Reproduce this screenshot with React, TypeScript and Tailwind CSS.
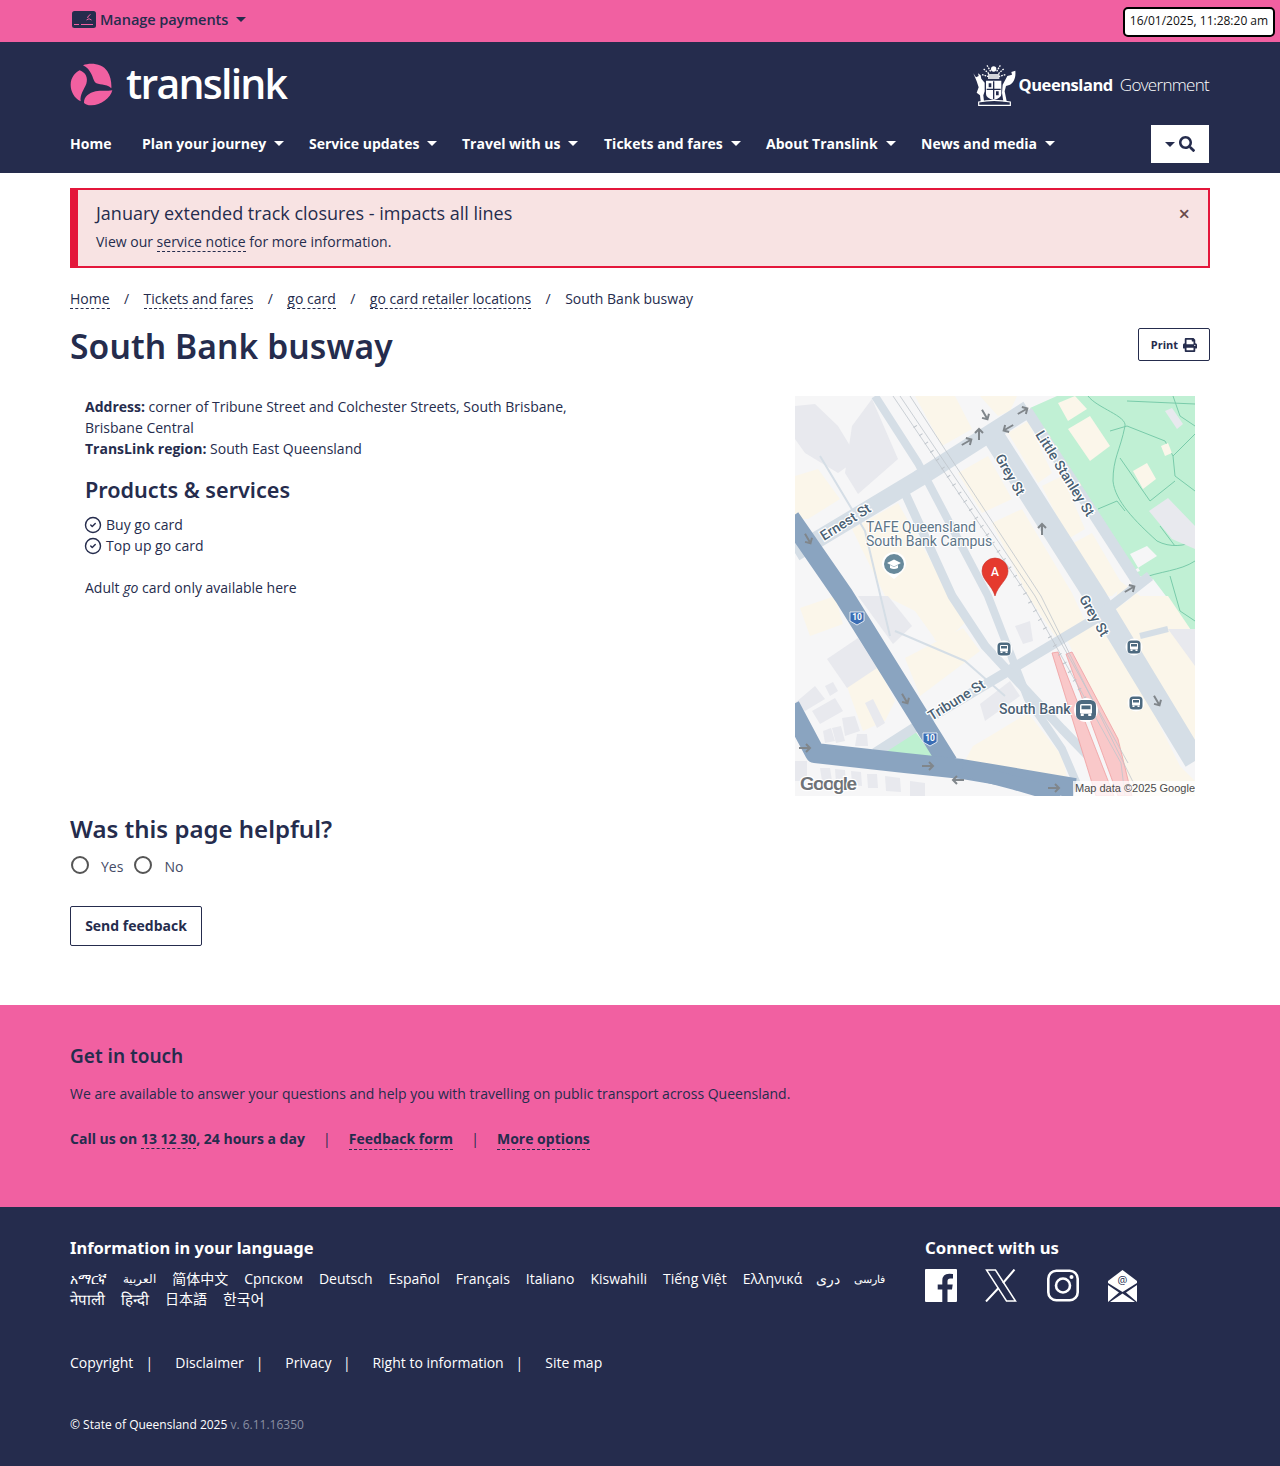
import { CircleCheck } from "lucide-react";
import { FaPrint, FaSearch } from "react-icons/fa";

const openSans = "font-['Open_Sans',sans-serif]";
const heading = "font-['Noto_Sans',sans-serif]";

const navItems = [
  { label: "Plan your journey", w: "w-[167px]" },
  { label: "Service updates", w: "w-[153px]" },
  { label: "Travel with us", w: "w-[142px]" },
  { label: "Tickets and fares", w: "w-[162px]" },
  { label: "About Translink", w: "w-[155px]" },
  { label: "News and media", w: "w-auto" },
];

const languages = [
  { text: "አማርኛ", size: "tracking-[-0.2px]" },
  { text: "العربية", size: "text-[11.5px]" },
  { text: "简体中文", size: "" },
  { text: "Српском", size: "" },
  { text: "Deutsch", size: "" },
  { text: "Español", size: "" },
  { text: "Français", size: "" },
  { text: "Italiano", size: "" },
  { text: "Kiswahili", size: "" },
  { text: "Tiếng Việt", size: "" },
  { text: "Ελληνικά", size: "" },
  { text: "دری", size: "-ml-[2px]" },
  { text: "فارسی", size: "text-[11px] -ml-[2px]" },
  { text: "नेपाली", size: "text-[15px]" },
  { text: "हिन्दी", size: "text-[15px]" },
  { text: "日本語", size: "" },
  { text: "한국어", size: "text-[15px]" },
];

const cream = [
  "120,0 160,0 177,33 147,50", "185,0 222,0 215,15 203,20", "213,37 233,25 257,77 243,87",
  "247,90 267,80 290,133 273,143", "273,150 297,137 328,190 317,200 300,200", "163,77 193,60 217,103 187,117",
  "197,127 227,113 277,197 290,225 262,243 233,200", "0,80 23,73 45,103 13,123 0,123",
  "57,133 103,107 150,190 172,225 145,250 120,215 90,200", "263,7 280,0 292,13 273,25", "273,33 295,20 315,50 295,65",
  "338,75 352,67 361,83 348,93", "366,50 373,47 377,57 370,60", "5,212 40,200 48,228 15,240",
  "50,285 80,265 100,305 90,325 68,335", "110,262 168,232 185,255 125,300", "200,337 233,317 267,360 273,385 167,370 178,350",
  "270,240 300,223 350,300 385,370 400,385 400,400 338,400 320,340", "320,213 340,200 373,200 400,240 400,350",
  "325,185 345,200 320,205", "130,205 150,200 165,225 140,245",
];

const gray = [
  "0,10 20,8 43,30 63,63 43,77 10,57 0,43", "57,30 77,3 103,63 63,98 50,77", "354,115 373,102 400,130 400,153 377,143",
  "370,15 377,12 388,28 382,33", "63,200 93,200 117,230 98,248", "32,263 63,242 82,272 52,292",
  "0,307 20,290 30,303 10,315", "17,315 40,302 48,315 25,328", "70,307 78,303 90,327 82,332", "30,290 38,286 43,295 35,300",
  "28,335 36,332 40,345 30,347", "37,332 46,330 50,345 41,347", "47,322 60,320 65,335 50,340", "62,338 72,338 73,350 60,350",
  "185,308 215,285 225,300 190,325", "373,233 400,233 400,270", "220,230 235,225 238,245 228,248",
  "25,372 35,372 37,385 27,385", "40,373 50,374 51,388 41,387", "56,375 66,376 67,390 57,389", "72,378 82,378 83,392 73,392",
  "90,380 105,382 106,396 91,395", "115,385 130,387 130,400 115,400", "0,365 12,365 12,385 0,385",
];

const arrows: [number, number, number][] = [
  [190, 19, 150], [228, 15, 60], [213, 32, 240], [184, 38, 0], [172, 46, 60], [247, 133, 0], [335, 193, 60],
  [13, 143, 150], [110, 303, 150], [362, 305, 150], [133, 370, 90], [163, 384, 270], [259, 392, 90], [10, 352, 90],
];

function Caret({ color = "border-t-white" }: { color?: string }) {
  return <span className={`inline-block w-0 h-0 border-x-[5px] border-x-transparent border-t-[5px] ${color}`} />;
}

function Dashed({ children }: { children: React.ReactNode }) {
  return <span className="border-b border-dashed border-[#252c4d]">{children}</span>;
}

function BusIcon({ x, y, big }: { x: number; y: number; big?: boolean }) {
  const r = big ? 10 : 6.5;
  const s = big ? 1.5 : 1;
  return (
    <g transform={`translate(${x} ${y})`}>
      <circle r={r + 2} fill="#fff" />
      <rect x={-r} y={-r} width={r * 2} height={r * 2} rx={r * 0.55} fill="#4d6a80" />
      <g transform={`scale(${s})`} fill="#fff">
        <rect x="-4" y="-4" width="8" height="6.5" rx="1" />
        <rect x="-3" y="-3" width="6" height="2.5" fill="#4d6a80" />
        <rect x="-3.5" y="2.5" width="2" height="1.5" />
        <rect x="1.5" y="2.5" width="2" height="1.5" />
      </g>
    </g>
  );
}

function Shield({ x, y }: { x: number; y: number }) {
  return (
    <g transform={`translate(${x} ${y})`}>
      <path d="M-7 -6H7V3L0 7L-7 3Z" fill="#3a6db4" stroke="#fff" strokeWidth="0.8" />
      <text y="2" textAnchor="middle" fontSize="8.5" fontWeight="700" fill="#fff" fontFamily="Roboto, sans-serif">10</text>
    </g>
  );
}

function StreetLabel({ x, y, r, children }: { x: number; y: number; r: number; children: string }) {
  return (
    <text
      transform={`translate(${x} ${y}) rotate(${r})`}
      textAnchor="middle"
      fontSize="14"
      fontWeight="500"
      fill="#4a5f73"
      stroke="#fff"
      strokeWidth="2.5"
      paintOrder="stroke"
      fontFamily="Roboto, sans-serif"
    >
      {children}
    </text>
  );
}

function StreetMap() {
  return (
    <svg viewBox="0 0 400 400" className="w-[400px] h-[400px] block shrink-0" fontFamily="Roboto, sans-serif">
      <rect width="400" height="400" fill="#f6f6f7" />
      <polygon points="235,12 262,0 400,0 400,245 380,212 358,183 343,180" fill="#c0f0d4" />
      <polygon points="330,180 362,160 352,150 335,158 345,175" fill="#f6f6f7" />
      <g fill="none" stroke="#79cbaa" strokeWidth="1">
        <path d="M293 0C302 12 332 20 330 30C325 55 318 62 318 85C320 105 340 125 362 145C375 152 390 150 400 145" />
        <path d="M315 35L332 30L370 45L378 60L380 80L400 95" />
        <path d="M325 62L355 105L380 85M303 113L322 105L330 115M378 60L400 38M332 5L400 8M378 0L385 20L400 30M365 130L380 150" />
        <path d="M345 183C365 175 385 175 400 165M375 180L385 215L400 225" />
      </g>
      {cream.map((p) => <polygon key={p} points={p} fill="#fbf6ea" />)}
      {gray.map((p) => <polygon key={p} points={p} fill="#e8e9ee" />)}
      <polygon points="87,357 120,335 140,363" fill="#bdf0d0" />

      <g fill="none" stroke="#d5dee6" strokeLinejoin="round">
        <path d="M195 35L300 200L400 365" strokeWidth="22" />
        <path d="M232 15L345 190" strokeWidth="11" />
        <path d="M0 157L123 83L233 13" strokeWidth="17" />
        <path d="M80 357L133 323L300 223L355 180" strokeWidth="10" />
        <path d="M80 0L123 67L193 200L233 303L267 353L285 395" strokeWidth="8" />
        <path d="M110 97L157 200L190 250L267 333L300 367" strokeWidth="9" />
        <path d="M25 60L70 135L95 240" strokeWidth="2" />
        <path d="M100 235L170 265L210 300" strokeWidth="2" />
        <path d="M345 240L373 233" strokeWidth="6" />
      </g>

      <g fill="#f9c8c9" stroke="#ef9ea0" strokeWidth="0.8">
        <polygon points="257,257 263,256 319,400 301,400" />
        <polygon points="271,258 277,256 323,343 337,400 323,400" />
      </g>

      <g fill="none" stroke="#bfc5cb" strokeWidth="0.8">
        <path d="M98 0L233 200L326 367L330 400" />
        <path d="M105 0L240 200L333 367" />
        <path d="M115 0L246 200L340 390" />
        <path d="M120 30L220 180L300 320" strokeDasharray="1 9" strokeWidth="4" />
      </g>

      <g fill="none" stroke="#8aa4c0" strokeLinejoin="round">
        <path d="M-5 122L49 200L153 367" strokeWidth="20" />
        <path d="M-5 310L20 357L110 367L167 373L280 392" strokeWidth="20" />
        <path d="M167 373L220 387L265 400" strokeWidth="14" />
      </g>

      {arrows.map(([x, y, r]) => (
        <g key={`${x}-${y}`} transform={`translate(${x} ${y}) rotate(${r})`} stroke="#80868b" strokeWidth="2" fill="none">
          <path d="M0 6V-5M-4 -1L0 -5L4 -1" />
        </g>
      ))}

      <StreetLabel x={53} y={130} r={-32}>Ernest St</StreetLabel>
      <StreetLabel x={211} y={81} r={60}>Grey St</StreetLabel>
      <StreetLabel x={266} y={80} r={58}>Little Stanley St</StreetLabel>
      <StreetLabel x={295} y={222} r={60}>Grey St</StreetLabel>
      <StreetLabel x={164} y={308} r={-32}>Tribune St</StreetLabel>

      <g fontSize="14" fill="#5d7587" stroke="#fff" strokeWidth="2" paintOrder="stroke">
        <text x="71" y="136">TAFE Queensland</text>
        <text x="71" y="150">South Bank Campus</text>
      </g>
      <text x="204" y="318" fontSize="14" fontWeight="500" fill="#4a6074" stroke="#fff" strokeWidth="2" paintOrder="stroke">South Bank</text>

      <g transform="translate(99 168)">
        <path d="M-12 0A12 12 0 1 1 12 0C12 6 5 11 0 15C-5 11 -12 6 -12 0Z" fill="#fff" />
        <circle r="10" fill="#688a9c" />
        <path d="M-7 -1L0 -4.5L7 -1L0 2.5ZM-4 1V4Q0 6 4 4V1L0 3Z" fill="#fff" />
      </g>

      <BusIcon x={209} y={253} />
      <BusIcon x={339} y={251} />
      <BusIcon x={341} y={307} />
      <BusIcon x={291} y={314} big />
      <Shield x={62} y={222} />
      <Shield x={135} y={343} />

      <g transform="translate(200 175)">
        <path d="M-13 0A13 13 0 1 1 13 0C13 9 3 14 0 25C-3 14 -13 9 -13 0Z" fill="#e53a2e" stroke="#c9302a" strokeWidth="0.6" />
        <text y="4.5" textAnchor="middle" fontSize="12" fontWeight="500" fill="#fff">A</text>
      </g>

      <text x="5" y="394" fontSize="19" fontWeight="700" fill="#6f7377" stroke="#fff" strokeWidth="2.5" paintOrder="stroke" fontFamily="Liberation Sans, sans-serif" textLength="57">Google</text>
      <rect x="278" y="385" width="122" height="15" fill="#fff" fillOpacity="0.75" />
      <text x="280" y="396" fontSize="11" fill="#4a4a4a" fontFamily="Liberation Sans, sans-serif">Map data ©2025 Google</text>
    </svg>
  );
}

function TranslinkMark() {
  return (
    <svg viewBox="13 10 132 132" className="w-[44px] h-[44px]" fill="#f160a1">
      <path d="M52 17C75 8 110 12 125 35C135 50 138 70 137 86C120 70 98 78 88 68C80 55 78 30 52 17Z" />
      <path d="M15 75C15 55 28 38 42 32C60 38 68 55 62 72C55 90 42 105 45 125C25 115 15 95 15 75Z" />
      <path d="M55 130C55 110 70 100 90 95C105 92 125 95 140 92C135 115 105 138 75 137C68 137 60 134 55 130Z" />
    </svg>
  );
}

function Crest() {
  return (
    <svg viewBox="10 10 132 126" className="w-[44px] h-[42px]" fill="#fff">
      <circle cx="75" cy="25" r="8" />
      <path d="M45 25L62 40M105 25L88 40M40 42L60 48M110 42L90 48M55 14L66 32M95 14L84 32" stroke="#fff" strokeWidth="4" strokeDasharray="5 3" fill="none" />
      <path d="M58 40H92V55H58Z" opacity="0.8" />
      <path d="M52 60H98V100Q98 112 75 118Q52 112 52 100Z" />
      <path d="M75 62V116M54 86H96" stroke="#252c4d" strokeWidth="4" />
      <path d="M60 68H68V80H60ZM82 92H90V104H82Z" fill="#252c4d" />
      <path d="M14 38L22 50L30 46L28 38L36 44L38 54L48 66L48 92L44 104L46 122H36L34 104L24 96L30 80L24 62Z" />
      <path d="M140 30C142 50 136 64 124 72L112 76L108 92L114 122H104L100 96L102 72L116 46L130 42L128 34Z" />
      <path d="M30 124Q75 114 125 124V134H30Z" fill="none" stroke="#fff" strokeWidth="3.5" />
    </svg>
  );
}

function PaymentIcon() {
  return (
    <svg viewBox="0 0 24 17" className="w-6 h-[17px]">
      <rect width="24" height="17" rx="2.5" fill="#252c4d" />
      <path d="M14.5 9a3.5 3.5 0 0 1 5 0M15.5 7a5 5 0 0 1 3-3.5" stroke="#f160a1" strokeWidth="1" fill="none" />
      <rect x="2" y="13" width="5" height="1" fill="#f160a1" />
      <rect x="9" y="13" width="12" height="1" fill="#f160a1" />
    </svg>
  );
}

function FacebookIcon() {
  return (
    <svg viewBox="0 0 32 33" className="w-8 h-[33px]" fill="#fff">
      <path d="M1 0H31Q32 0 32 1V32Q32 33 31 33H22.5V20.5H27L27.7 15.5H22.5V12.2Q22.5 9.5 25.3 9.5H28V5Q26 4.7 24.2 4.7Q17.3 4.7 17.3 11.7V15.5H12.7V20.5H17.3V33H1Q0 33 0 32V1Q0 0 1 0Z" />
    </svg>
  );
}

function XIcon() {
  return (
    <svg viewBox="0 0 32 33" className="w-8 h-[33px]" fill="none" stroke="#fff" strokeWidth="1.5">
      <path d="M1.5 1H10.5L30.5 32H21.5Z" />
      <path d="M29.5 0.5L18 14M13.5 19L1 32.5" strokeWidth="2" />
    </svg>
  );
}

function InstagramIcon() {
  return (
    <svg viewBox="0 0 32 33" className="w-8 h-[33px]" fill="none" stroke="#fff" strokeWidth="2.6">
      <rect x="1.3" y="1.8" width="29.4" height="29.4" rx="8" />
      <circle cx="16" cy="16.5" r="7" />
      <circle cx="24.5" cy="8" r="2" fill="#fff" stroke="none" />
    </svg>
  );
}

function MailIcon() {
  return (
    <svg viewBox="0 0 29 32" className="w-[29px] h-8" fill="#fff">
      <path d="M0 11L14.5 0L29 11V13L14.5 22L0 13Z" />
      <path d="M0 15V32L11 22.5ZM29 15V32L18 22.5ZM2 32L14.5 23.5L27 32Z" />
      <text x="14.5" y="14" textAnchor="middle" fontSize="11" fill="#252c4d" fontFamily="Open Sans, sans-serif">@</text>
    </svg>
  );
}

export default function App() {
  return (
    <div className={`${openSans} relative w-full text-[14px] leading-[21px] text-[#252c4d] bg-white`}>
      <div className="h-[42px] bg-[#f160a1] px-[70px] pt-[7px]">
        <div className="flex items-center gap-2 h-6 pl-[2px] font-semibold text-[14.6px] tracking-[-0.1px]">
          <PaymentIcon />
          <span className="-ml-1">Manage payments</span>
          <Caret color="border-t-[#252c4d]" />
        </div>
      </div>
      <div className="absolute top-[7px] left-[1123px] w-[152px] h-[30px] pb-[3px] flex items-center justify-center rounded-[5px] border-2 border-black bg-white text-[12px] text-[#111]">
        16/01/2025, 11:28:20 am
      </div>

      <header className="h-[131px] bg-[#252c4d] px-[70px] text-white">
        <div className="flex items-center justify-between h-[83px] pt-[2px]">
          <div className="flex items-center gap-3">
            <TranslinkMark />
            <span className="text-[41px] font-semibold leading-none tracking-[-1.75px] -mt-[2px]">translink</span>
          </div>
          <div className="flex items-center gap-[3px] mr-[1px]">
            <Crest />
            <span className="text-[16.5px] font-bold tracking-[-0.45px]">Queensland</span>
            <span className="ml-[4px] text-[17px] font-light tracking-[-0.7px]">Government</span>
          </div>
        </div>
        <nav className="flex items-center h-[38px] font-bold text-[14px]">
          <span className="w-[72px] -mt-[2px]">Home</span>
          {navItems.map((item) => (
            <span key={item.label} className={`flex items-center gap-2 -mt-[2px] ${item.w}`}>
              {item.label}
              <Caret />
            </span>
          ))}
          <div className="ml-auto mr-[1px] w-[58px] h-[38px] bg-white flex items-center justify-center gap-1 text-[#252c4d]">
            <Caret color="border-t-[#252c4d]" />
            <FaSearch className="w-4 h-4" />
          </div>
        </nav>
      </header>

      <main className="px-[70px]">
        <div className="mt-[15px] h-[80px] border-2 border-l-[8px] border-[#e4173b] bg-[#f8e3e3] pl-[18px] pr-[18px] flex justify-between">
          <div className="pt-[11px]">
            <div className="text-[18px] leading-[25px]">January extended track closures - impacts all lines</div>
            <div className="mt-[5px] text-[14px]">
              View our <Dashed>service notice</Dashed> for more information.
            </div>
          </div>
          <span className="mt-[14px] text-[20px] leading-5 font-semibold text-[#6b4a4a]">×</span>
        </div>

        <div className="mt-[20px] h-[21px] flex text-[14px]">
          <Dashed>Home</Dashed>
          <span className="w-[34px] text-center">/</span>
          <Dashed>Tickets and fares</Dashed>
          <span className="w-[34px] text-center">/</span>
          <Dashed>go card</Dashed>
          <span className="w-[34px] text-center">/</span>
          <Dashed>go card retailer locations</Dashed>
          <span className="w-[34px] text-center">/</span>
          <span>South Bank busway</span>
        </div>
        <div className="mt-[9px] flex items-start justify-between h-[78px]">
          <h1 className={`${heading} mt-[3px] text-[33.6px] leading-[50px] font-semibold tracking-[0.1px]`}>South Bank busway</h1>
          <div className="mt-[10px] w-[72px] h-[33px] border border-[#252c4d] rounded-[2px] flex items-center justify-center gap-[5px] text-[11px] font-bold">
            Print <FaPrint className="w-[14px] h-[14px]" />
          </div>
        </div>

        <div className="flex justify-between pl-[15px] pr-[15px]">
          <div className="w-[500px]">
            <p>
              <b>Address:</b> corner of Tribune Street and Colchester Streets, South Brisbane, Brisbane Central
              <br />
              <b>TransLink region:</b> South East Queensland
            </p>
            <h2 className={`${heading} mt-[13px] text-[21.6px] leading-[36px] font-semibold`}>Products &amp; services</h2>
            <ul className="mt-[6px]">
              <li className="flex items-center gap-[4px]"><CircleCheck className="w-[18px] h-[18px] -ml-[1px] mt-[1px]" strokeWidth={1.9} />Buy go card</li>
              <li className="flex items-center gap-[4px]"><CircleCheck className="w-[18px] h-[18px] -ml-[1px] mt-[1px]" strokeWidth={1.9} />Top up go card</li>
            </ul>
            <p className="mt-[21px]">Adult <i>go</i> card only available here</p>
          </div>
          <StreetMap />
        </div>

        <h2 className={`${heading} mt-[15px] text-[24px] leading-[36px] font-semibold`}>Was this page helpful?</h2>
        <div className="mt-[6px] flex items-center h-[24px] text-[#444b66]">
          <span className="ml-[1px] w-[18px] h-[18px] rounded-full border-2 border-[#555]" />
          <span className="ml-[12px] mt-[3px]">Yes</span>
          <span className="ml-[11px] w-[18px] h-[18px] rounded-full border-2 border-[#555]" />
          <span className="ml-[12px] mt-[3px]">No</span>
        </div>
        <div className="mt-[29px] w-[132px] h-[40px] pb-[2px] border border-[#252c4d] rounded-[2px] flex items-center justify-center font-bold text-[14px]">
          Send feedback
        </div>
      </main>

      <section className="mt-[59px] h-[202px] bg-[#f160a1] px-[70px] pt-[36px]">
        <h2 className={`${heading} text-[19px] leading-[30px] font-semibold`}>Get in touch</h2>
        <p className="mt-[12px]">We are available to answer your questions and help you with travelling on public transport across Queensland.</p>
        <div className="mt-[24px] flex font-bold">
          <span>Call us on <Dashed>13 12 30</Dashed>, 24 hours a day</span>
          <span className="w-[44px] text-center font-normal">|</span>
          <Dashed>Feedback form</Dashed>
          <span className="w-[44px] text-center font-normal">|</span>
          <Dashed>More options</Dashed>
        </div>
      </section>

      <footer className="h-[259px] bg-[#252c4d] px-[70px] pt-[27px] text-white">
        <div className="flex">
          <div className="w-[855px]">
            <h2 className={`${heading} text-[16.5px] leading-[27px] font-bold`}>Information in your language</h2>
            <div className="mt-[8px] w-[830px] flex flex-wrap items-center gap-x-[16px] text-[14px] leading-[20px] font-['Open_Sans','Noto_Sans_CJK_SC','Noto_Sans_CJK_JP',sans-serif]">
              {languages.map((l) => <span key={l.text} className={l.size}>{l.text}</span>)}
            </div>
          </div>
          <div>
            <h2 className={`${heading} text-[16.7px] leading-[27px] font-bold`}>Connect with us</h2>
            <div className="mt-[8px] flex items-center">
              <FacebookIcon />
              <span className="w-7" />
              <XIcon />
              <span className="w-[30px]" />
              <InstagramIcon />
              <span className="w-[29px]" />
              <MailIcon />
            </div>
          </div>
        </div>
        <div className="mt-[43px] flex">
          <span>Copyright</span><span className="w-[42px] text-center pr-[10px]">|</span>
          <span>Disclaimer</span><span className="w-[41.5px] text-center pr-[10px]">|</span>
          <span>Privacy</span><span className="w-[41px] text-center pr-[10px]">|</span>
          <span>Right to information</span><span className="w-[41.5px] text-center pr-[10px]">|</span>
          <span>Site map</span>
        </div>
        <div className="mt-[41px] text-[12px]">
          © State of Queensland 2025 <span className="text-[#8a8fa3]">v. 6.11.16350</span>
        </div>
      </footer>
    </div>
  );
}
